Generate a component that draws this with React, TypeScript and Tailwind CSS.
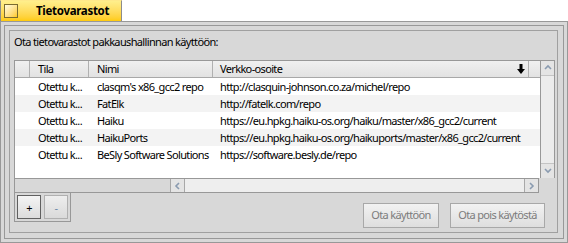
import React from "react";

const rows = [
  { state: "Otettu k...", name: "clasqm's x86_gcc2 repo", url: "http://clasquin-johnson.co.za/michel/repo" },
  { state: "Otettu k...", name: "FatElk", url: "http://fatelk.com/repo" },
  { state: "Otettu k...", name: "Haiku", url: "https://eu.hpkg.haiku-os.org/haiku/master/x86_gcc2/current" },
  { state: "Otettu k...", name: "HaikuPorts", url: "https://eu.hpkg.haiku-os.org/haikuports/master/x86_gcc2/current" },
  { state: "Otettu k...", name: "BeSly Software Solutions", url: "https://software.besly.de/repo" },
];

const font = { fontFamily: '"Noto Sans", "DejaVu Sans", sans-serif' };

const Arrow = ({ dir }: { dir: "up" | "down" | "left" | "right" }) => {
  const pts: Record<string, string> = {
    up: "1,5 4,2 7,5",
    down: "1,2 4,5 7,2",
    left: "5,1 2,4 5,7",
    right: "2,1 5,4 2,7",
  };
  return (
    <svg width="8" height="8" viewBox="0 0 8 8">
      <polyline points={pts[dir]} fill="none" stroke="#8a9bb0" strokeWidth="1.6" />
    </svg>
  );
};

const HaikuButton = ({ label, width, disabled }: { label: string; width: string; disabled?: boolean }) => (
  <div
    className={`${width} h-[25px] flex items-center justify-center border border-[#a8a8a8] bg-gradient-to-b from-[#f2f2f2] to-[#dedede] ${
      disabled ? "text-[#7c7c7c]" : "text-black"
    }`}
  >
    {label}
  </div>
);

export default function App() {
  return (
    <div className="w-[568px] h-[243px] bg-white text-[11px] tracking-[-0.65px] text-black" style={font}>
      {/* Tab */}
      <div className="h-[21px] w-[122px] flex items-center border-l border-r border-t border-[#8c8c8c] border-t-[#ffe98a] bg-gradient-to-b from-[#ffef8c] to-[#ffcb05]">
        <div className="ml-[3px] w-[14px] h-[14px] border border-[#7a6a30] bg-gradient-to-br from-[#fffbe0] to-[#ffc900]" />
        <span className="ml-[18px] font-bold text-[11.5px] tracking-[-0.3px] leading-none">Tietovarastot</span>
      </div>

      {/* Window frame */}
      <div className="h-[222px] border border-[#989898] bg-[#d8d8d8] p-[3px]">
        <div className="h-full border border-[#989898] pt-[4px] pl-[4px] pr-[5px] pb-[5px]">
          {/* Group box */}
          <div className="h-full border border-[#a0a0a0] pl-[4px] pr-[2px] flex flex-col">
            <div className="mt-[3px] h-[16px] leading-[16px] whitespace-nowrap">Ota tietovarastot pakkaushallinnan käyttöön:</div>

            {/* List */}
            <div className="mt-[10px] flex flex-col">
              <div className="flex h-[118px]">
                <div className="flex-1 border-t border-l border-[#989898] bg-white flex flex-col overflow-hidden">
                  <div className="h-[17px] flex border-b border-[#a8a8a8] bg-gradient-to-b from-[#f0f0f0] to-[#e2e2e2] leading-[16px]">
                    <div className="w-[15px] shrink-0 border-r border-[#b0b0b0]" />
                    <div className="w-[59px] shrink-0 border-r border-[#b0b0b0] pl-2">Tila</div>
                    <div className="w-[124px] shrink-0 border-r border-[#b0b0b0] pl-2">Nimi</div>
                    <div className="w-[316px] shrink-0 border-r border-[#b0b0b0] pl-[7px] flex items-center justify-between pr-[3px]">
                      <span>Verkko-osoite</span>
                      <svg width="8" height="10" viewBox="0 0 8 10">
                        <rect x="2.5" y="0" width="3" height="5" fill="#000" />
                        <polygon points="0,5 8,5 4,10" fill="#000" />
                      </svg>
                    </div>
                    <div className="flex-1" />
                  </div>
                  {rows.map((r, i) => (
                    <div
                      key={r.name}
                      className={`h-[17px] flex leading-[17px] whitespace-nowrap ${i % 2 === 1 ? "bg-[#f3f3f3]" : "bg-white"}`}
                    >
                      <div className="w-[15px] shrink-0" />
                      <div className="w-[59px] shrink-0 pl-2 overflow-hidden">{r.state}</div>
                      <div className="w-[124px] shrink-0 pl-2 overflow-hidden">{r.name}</div>
                      <div className="w-[316px] shrink-0 pl-[7px] overflow-hidden">{r.url}</div>
                    </div>
                  ))}
                </div>
                {/* Vertical scrollbar */}
                <div className="w-[15px] border-t border-l border-r border-[#989898] bg-[#ececec] flex flex-col justify-between">
                  <div className="h-[15px] border-b border-[#c4c4c4] bg-[#e4e4e4] flex items-center justify-center">
                    <Arrow dir="up" />
                  </div>
                  <div className="h-[15px] border-t border-[#c4c4c4] bg-[#e4e4e4] flex items-center justify-center">
                    <Arrow dir="down" />
                  </div>
                </div>
              </div>
              {/* Horizontal scrollbar row */}
              <div className="flex h-[15px]">
                <div className="w-[525px] flex border border-[#989898]">
                  <div className="w-[155px] bg-[#d8d8d8]" />
                  <div className="w-[15px] border-l border-r border-[#a8a8a8] bg-[#e4e4e4] flex items-center justify-center">
                    <Arrow dir="left" />
                  </div>
                  <div className="flex-1 bg-[#eeeeee]" />
                  <div className="w-[14px] border-l border-[#a8a8a8] bg-[#e4e4e4] flex items-center justify-center">
                    <Arrow dir="right" />
                  </div>
                </div>
              </div>
            </div>

            {/* Bottom row */}
            <div className="flex justify-between items-start">
              <div className="-mt-px flex gap-[3px] border border-[#989898] p-[2px]">
                <div className="w-[24px] h-[24px] border border-[#606060] bg-gradient-to-b from-[#f4f4f4] to-[#dcdcdc] flex items-center justify-center text-[11px] leading-none">
                  +
                </div>
                <div className="w-[24px] h-[24px] border border-[#b0b0b0] bg-gradient-to-b from-[#eeeeee] to-[#dadada] flex items-center justify-center text-[11px] leading-none text-[#6b88a8]">
                  -
                </div>
              </div>
              <div className="mt-[10px] mr-[10px] flex gap-[11px]">
                <HaikuButton label="Ota käyttöön" width="w-[76px]" disabled />
                <HaikuButton label="Ota pois käytöstä" width="w-[95px]" disabled />
              </div>
            </div>
          </div>
        </div>
      </div>
    </div>
  );
}
